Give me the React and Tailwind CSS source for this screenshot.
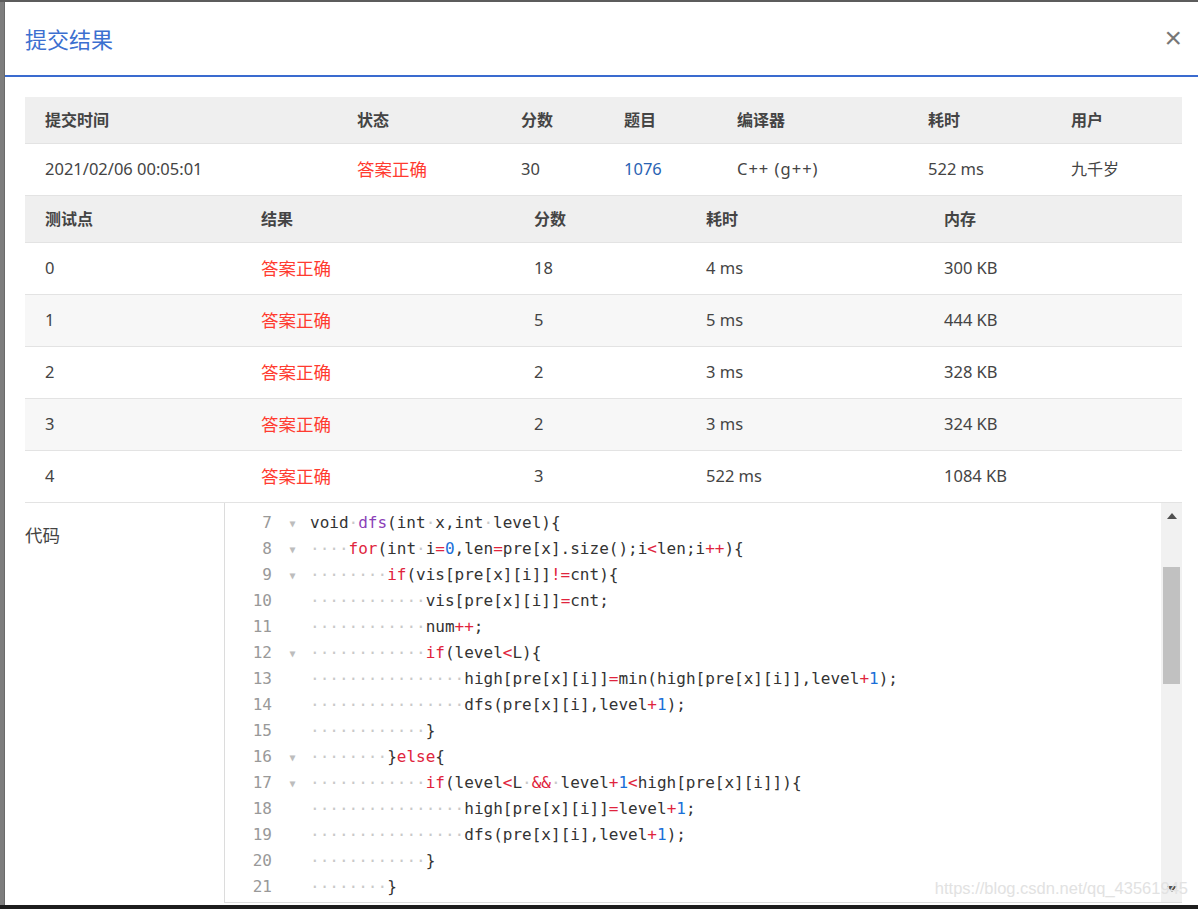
import React from 'react';

const sans = "font-['Noto_Sans','Noto_Sans_CJK_SC',sans-serif]";
const mono = "font-['DejaVu_Sans_Mono','Noto_Sans_CJK_SC',monospace]";

const summaryCols = ['w-[312px]', 'w-[164px]', 'w-[103px]', 'w-[113px]', 'w-[191px]', 'w-[143px]', 'flex-1'];
const caseCols = ['w-[216px]', 'w-[273px]', 'w-[172px]', 'w-[238px]', 'flex-1'];

const cases = [
  ['0', '18', '4 ms', '300 KB'],
  ['1', '5', '5 ms', '444 KB'],
  ['2', '2', '3 ms', '328 KB'],
  ['3', '2', '3 ms', '324 KB'],
  ['4', '3', '522 ms', '1084 KB'],
];

const code = [
  [7, true, 'void dfs(int x,int level){'],
  [8, true, '    for(int i=0,len=pre[x].size();i<len;i++){'],
  [9, true, '        if(vis[pre[x][i]]!=cnt){'],
  [10, false, '            vis[pre[x][i]]=cnt;'],
  [11, false, '            num++;'],
  [12, true, '            if(level<L){'],
  [13, false, '                high[pre[x][i]]=min(high[pre[x][i]],level+1);'],
  [14, false, '                dfs(pre[x][i],level+1);'],
  [15, false, '            }'],
  [16, true, '        }else{'],
  [17, true, '            if(level<L && level+1<high[pre[x][i]]){'],
  [18, false, '                high[pre[x][i]]=level+1;'],
  [19, false, '                dfs(pre[x][i],level+1);'],
  [20, false, '            }'],
  [21, false, '        }'],
];

// split a line into coloured tokens
const tokenize = (line) => {
  const re = /( )|\b(for|if|else)\b|(\d+)|(&&|\+\+|!=|[=<+])|([A-Za-z_]\w*)|(.)/g;
  const out = [];
  let m;
  while ((m = re.exec(line)) !== null) {
    if (m[1]) out.push({ t: '·', c: 'text-[#c9c9c9]' });
    else if (m[2]) out.push({ t: m[2], c: 'text-[#e0243d]' });
    else if (m[3]) out.push({ t: m[3], c: 'text-[#1a6fd8]' });
    else if (m[4]) out.push({ t: m[4], c: 'text-[#e0243d]' });
    else if (m[5]) {
      const purple = m[5] === 'dfs' && line.startsWith('void');
      out.push({ t: m[5], c: purple ? 'text-[#8b3fb8]' : 'text-[#333]' });
    } else out.push({ t: m[6], c: 'text-[#333]' });
  }
  return out;
};

const Row = ({ cols, cells, className }) => (
  <div className={`flex items-center ${className}`}>
    {cells.map((cell, i) => (
      <div key={i} className={`${cols[i]} pl-5`}>{cell}</div>
    ))}
  </div>
);

const Ok = () => <span className="text-[17.5px] text-[#ff3b30]">答案正确</span>;

export default function App() {
  return (
    <div className={`w-[1198px] h-[909px] flex flex-col bg-[#7a7a7a] overflow-hidden ${sans}`}>
      <div className="h-[2px] bg-[#5c5c5c]" />
      <div className="flex h-[903px]">
        <div className="w-[5px] bg-[#7d7d7d] border-r border-[#6a6a6a]" />
        <div className="flex-1 bg-white flex flex-col relative">
          {/* header */}
          <div className="h-[73px] flex items-center justify-between pl-5 pr-[16px]">
            <h1 className="text-[22px] text-[#3c6fd0] leading-none">提交结果</h1>
            <span className="text-[30px] leading-none text-[#777] font-['Liberation_Sans',sans-serif] pb-[2px]">×</span>
          </div>
          <div className="h-[2px] bg-[#3a6bcf]" />

          <div className="pl-5 pr-4 pt-5 flex flex-col text-[16.5px] text-[#444]">
            {/* summary */}
            <Row
              cols={summaryCols}
              className="h-[46px] bg-[#efefef] font-semibold text-[16px] text-[#444]"
              cells={['提交时间', '状态', '分数', '题目', '编译器', '耗时', '用户']}
            />
            <Row
              cols={summaryCols}
              className="h-[52px] border-t border-[#e3e3e3]"
              cells={[
                '2021/02/06 00:05:01',
                <Ok />,
                '30',
                <span className="text-[#2a63b3]">1076</span>,
                <span className="tracking-[1px]">C++ (g++)</span>,
                '522 ms',
                <span className="text-[16px]">九千岁</span>,
              ]}
            />

            {/* test cases */}
            <Row
              cols={caseCols}
              className="h-[47px] bg-[#efefef] border-t border-[#e3e3e3] font-semibold text-[16px] text-[#444]"
              cells={['测试点', '结果', '分数', '耗时', '内存']}
            />
            {cases.map((c, i) => (
              <Row
                key={i}
                cols={caseCols}
                className={`h-[52px] border-t border-[#e3e3e3] ${i % 2 ? 'bg-[#f7f7f7]' : 'bg-white'}`}
                cells={[c[0], <Ok />, c[1], c[2], c[3]]}
              />
            ))}

            {/* code */}
            <div className="flex border-t border-[#e3e3e3]">
              <div className="w-[199px] pt-5 text-[17.5px] leading-6 text-[#444]">代码</div>
              <div className="flex-1 h-[400px] border-l border-b border-[#dcdcdc] flex">
                <div className={`flex-1 pt-[7px] ${mono} text-[16px]`}>
                  {code.map(([n, fold, text]) => (
                    <div key={n} className="h-[26px] flex items-center whitespace-pre">
                      <span className="w-[47px] text-right text-[#999]">{n}</span>
                      <span className="w-[38px] flex justify-center pl-[3px]">
                        {fold && <span className="text-[10px] text-[#bdbdbd]">▼</span>}
                      </span>
                      <span>
                        {tokenize(text).map((tk, j) => (
                          <span key={j} className={tk.c}>{tk.t}</span>
                        ))}
                      </span>
                    </div>
                  ))}
                </div>
                {/* scrollbar */}
                <div className="w-[21px] bg-[#f1f1f1] flex flex-col items-center">
                  <svg width="10" height="6" viewBox="0 0 10 6" className="mt-[10px]">
                    <path d="M5 0L10 6H0Z" fill="#505050" />
                  </svg>
                  <div className="mt-[48px] w-[17px] h-[117px] bg-[#c1c1c1]" />
                  <div className="flex-1" />
                  <svg width="10" height="6" viewBox="0 0 10 6" className="mb-[10px]">
                    <path d="M0 0H10L5 6Z" fill="#505050" />
                  </svg>
                </div>
              </div>
            </div>
          </div>

          <div className="absolute right-[10px] bottom-[4px] text-[16.5px] text-[#e2e2e2] font-['Liberation_Sans',sans-serif]">
            https://blog.csdn.net/qq_43561945
          </div>
        </div>
      </div>
      <div className="h-[4px] bg-[#1d1d1d]" />
    </div>
  );
}
